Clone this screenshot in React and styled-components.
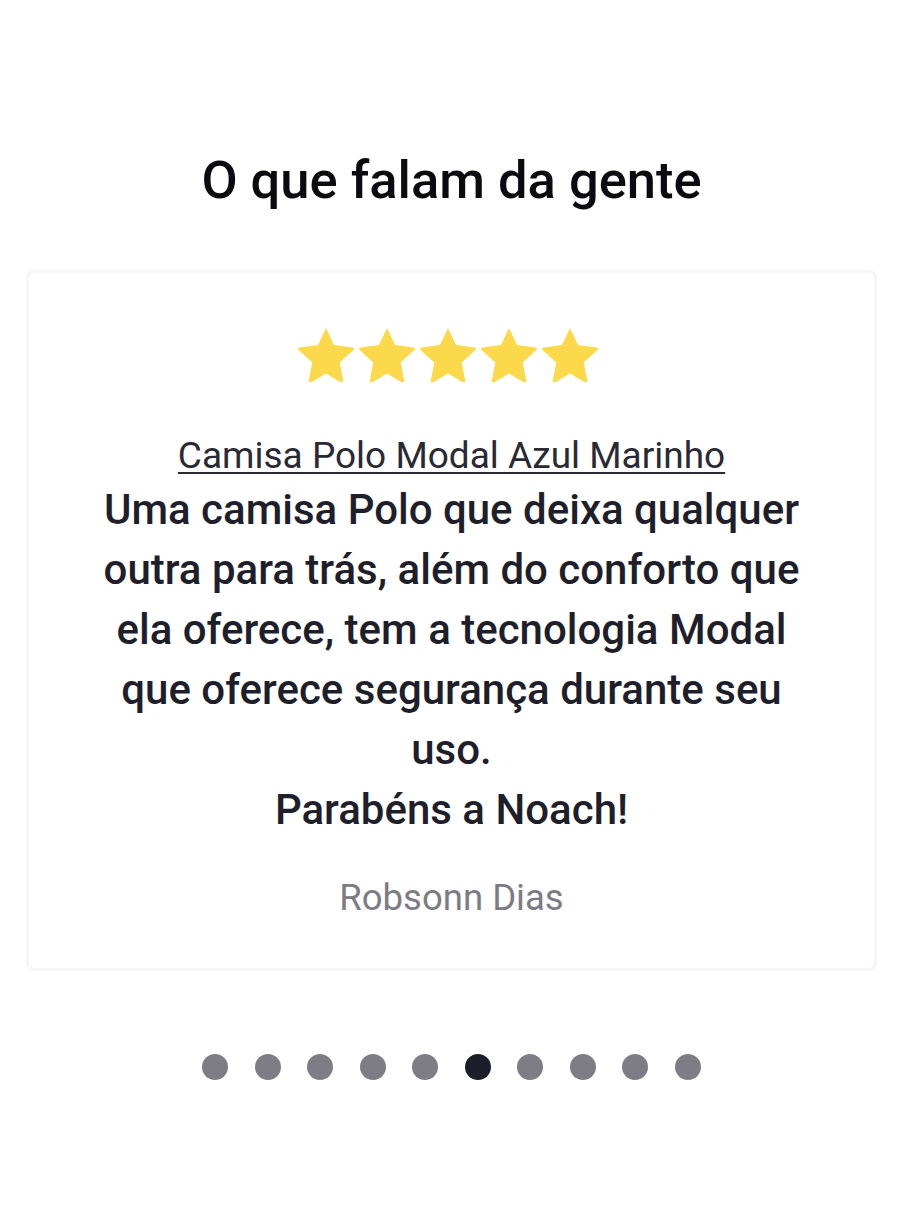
import React from 'react'
import styled, { createGlobalStyle } from 'styled-components'

const GlobalStyle = createGlobalStyle`
  body {
    margin: 0;
    background: #ffffff;
    font-family: Roboto, "Liberation Sans", sans-serif;
  }
`

const Section = styled.section`
  padding: 150px 27px 0 26px;
  display: flex;
  flex-direction: column;
  align-items: center;
`

const Title = styled.h2`
  margin: 0;
  font-size: 52.5px;
  line-height: 60px;
  font-weight: 500;
  color: #0b0b0f;
`

const Card = styled.div`
  margin-top: 60px;
  width: 100%;
  box-sizing: border-box;
  border: 3px solid #f6f6f6;
  border-radius: 8px;
  padding: 55px 58px 46px;
  display: flex;
  flex-direction: column;
  align-items: center;
  text-align: center;
`

const Stars = styled.div`
  display: flex;
  gap: 5px;
  margin-right: 8px;
`

const Product = styled.a`
  margin-top: 50px;
  font-size: 37px;
  line-height: 48px;
  color: #2a2a35;
  text-decoration: underline;
  text-underline-offset: 4px;
  text-decoration-thickness: 2px;
`

const Quote = styled.p`
  margin: 0;
  font-size: 42px;
  line-height: 60px;
  font-weight: 500;
  color: #1f1f2b;
`

const Author = styled.div`
  margin-top: 34px;
  font-size: 36.5px;
  line-height: 48px;
  color: #7c7c85;
`

const Dots = styled.div`
  margin-top: 83px;
  display: flex;
  gap: 26.5px;
`

const Dot = styled.span`
  width: 26px;
  height: 26px;
  border-radius: 50%;
  background: ${p => (p.$active ? '#1e1d2a' : '#7e7d86')};
`

const Star = () => (
  <svg width="56" height="54" viewBox="1.2 0.8 21.6 20.9">
    <path
      d="M12 0.8l3.1 6.6 7.2 0.9c0.5 0.1 0.7 0.7 0.3 1l-5.3 4.9 1.4 7.1c0.1 0.5-0.4 0.9-0.9 0.6L12 18.4l-5.8 3.5c-0.5 0.3-1-0.1-0.9-0.6l1.4-7.1-5.3-4.9c-0.4-0.3-0.2-0.9 0.3-1l7.2-0.9z"
      fill="#fcd94a"
    />
  </svg>
)

export default function App() {
  return (
    <>
      <GlobalStyle />
      <Section>
        <Title>O que falam da gente</Title>
        <Card>
          <Stars>
            {[0, 1, 2, 3, 4].map(i => (
              <Star key={i} />
            ))}
          </Stars>
          <Product href="#">Camisa Polo Modal Azul Marinho</Product>
          <Quote>
            Uma camisa Polo que deixa qualquer outra para trás, além do conforto que ela oferece,
            tem a tecnologia Modal que oferece segurança durante seu uso.
            <br />
            Parabéns a Noach!
          </Quote>
          <Author>Robsonn Dias</Author>
        </Card>
        <Dots>
          {Array.from({ length: 10 }).map((_, i) => (
            <Dot key={i} $active={i === 5} />
          ))}
        </Dots>
      </Section>
    </>
  )
}
